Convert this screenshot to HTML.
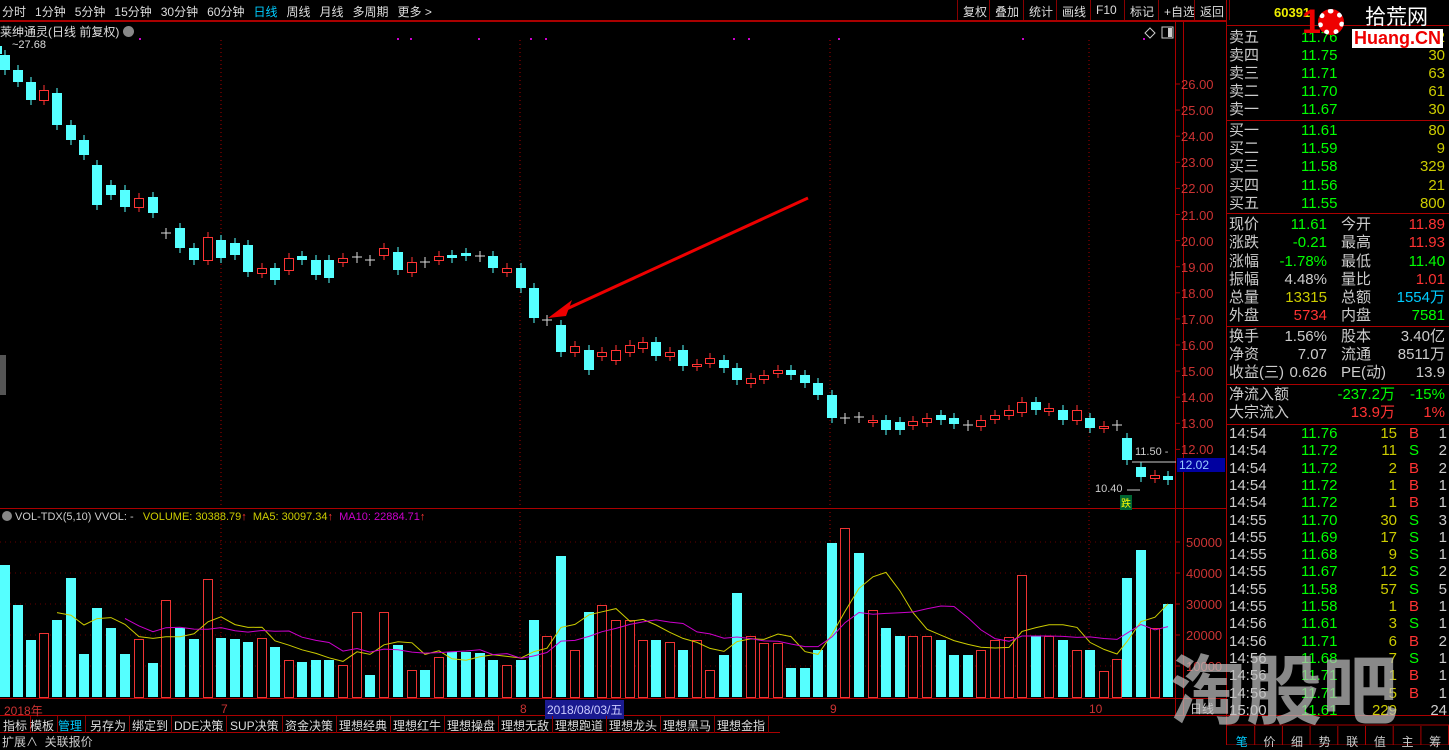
<!DOCTYPE html>
<html><head><meta charset="utf-8">
<style>
*{margin:0;padding:0;box-sizing:border-box}
body{width:1449px;height:745px;background:#000;overflow:hidden;position:relative;font-family:"Liberation Sans","Noto Sans CJK SC",sans-serif;font-size:12px;color:#c8c8c8}
.a{position:absolute;white-space:nowrap}
.tb span{margin-right:9px}
.btn{position:absolute;top:0;height:20px;border-left:1px solid #800;padding:3px 5px;font-size:12px;color:#ddd}
.rp div.r{position:absolute;left:1229px;width:218px;height:18px;font-size:15px;line-height:18px}
.r span{position:absolute}
.g{color:#0f0}.y{color:#cc0}.rd{color:#f33}.w{color:#ccc}.c{color:#0cf}
.tab{position:absolute;top:716px;height:17px;border-right:1px solid #800;padding:1px 3px;font-size:12px;color:#ddd}
</style></head><body>
<div class="a tb" style="left:2px;top:3px;font-size:12px;color:#ddd"><span>分时</span><span>1分钟</span><span>5分钟</span><span>15分钟</span><span>30分钟</span><span>60分钟</span><span style="color:#0cf">日线</span><span>周线</span><span>月线</span><span>多周期</span><span>更多 &gt;</span></div>
<div class="btn" style="left:957px">复权</div><div class="btn" style="left:989px">叠加</div><div class="btn" style="left:1023px">统计</div><div class="btn" style="left:1056px">画线</div><div class="btn" style="left:1090px">F10</div><div class="btn" style="left:1124px">标记</div><div class="btn" style="left:1158px">+自选</div><div class="btn" style="left:1194px;border-right:1px solid #800">返回</div>
<div class="a" style="left:0;top:20px;width:1226px;height:2px;background:#a00"></div>
<div class="a" style="left:0;top:23px;color:#ddd;font-size:12px">莱绅通灵(日线 前复权) <span style="display:inline-block;width:11px;height:11px;border-radius:6px;background:#888;vertical-align:-1px"></span></div>
<div class="a" style="left:12px;top:39px;color:#ddd;font-size:11px">~27.68</div>
<svg class="a" style="left:0;top:0" width="1449" height="745" id="sv"></svg>
<div id="ax"></div>
<div class="a" style="left:1177px;top:458px;width:48px;height:14px;background:#0000a0;color:#9cf;font-size:12px;padding-left:2px">12.02</div>
<div class="a" style="left:1135px;top:446px;color:#ccc;font-size:11px">11.50 -</div>
<div class="a" style="left:1095px;top:483px;color:#ccc;font-size:11px">10.40</div>
<div class="a" style="left:1120px;top:495px;background:#063;color:#ff0;font-size:10px;padding:0 1px">跌</div>
<div class="a" style="left:2px;top:511px;font-size:11px;color:#ccc"><span style="display:inline-block;width:10px;height:10px;border-radius:5px;background:#888;vertical-align:-1px"></span> VOL-TDX(5,10) VVOL: - &nbsp; <span style="color:#cc0">VOLUME: 30388.79<span style="color:#f33">↑</span> &nbsp;MA5: 30097.34<span style="color:#f33">↑</span></span> &nbsp;<span style="color:#c0c">MA10: 22884.71</span><span style="color:#f33">↑</span></div>
<div class="a" style="left:4px;top:702px;color:#c33;font-size:12px">2018年</div>
<div class="a" style="left:221px;top:702px;color:#c33">7</div>
<div class="a" style="left:520px;top:702px;color:#c33">8</div>
<div class="a" style="left:545px;top:700px;background:#1a1a90;color:#ccf;padding:1px 2px">2018/08/03/五</div>
<div class="a" style="left:830px;top:702px;color:#c33">9</div>
<div class="a" style="left:1089px;top:702px;color:#c33">10</div>
<div class="a" style="left:1190px;top:700px;color:#ccc">日线</div>
<div class="tab" style="left:0">指标</div><div class="tab" style="left:27px">模板</div><div class="tab" style="left:55px;color:#0cf">管理</div><div class="tab" style="left:87px">另存为</div><div class="tab" style="left:129px">绑定到</div><div class="tab" style="left:171px">DDE决策</div><div class="tab" style="left:227px">SUP决策</div><div class="tab" style="left:282px">资金决策</div><div class="tab" style="left:336px">理想经典</div><div class="tab" style="left:390px">理想红牛</div><div class="tab" style="left:444px">理想操盘</div><div class="tab" style="left:498px">理想无敌</div><div class="tab" style="left:552px">理想跑道</div><div class="tab" style="left:606px">理想龙头</div><div class="tab" style="left:660px">理想黑马</div><div class="tab" style="left:714px">理想金指</div>
<div class="a" style="left:2px;top:733px;color:#ccc">扩展∧ &nbsp;关联报价</div>
<div class="rp" id="rp"></div>
<div class="a" style="left:1274px;top:5px;color:#ee0;font-size:13px;font-weight:bold">60391</div>
<div class="a" style="left:1302px;top:3px;font-size:34px;font-weight:bold;color:#e00;font-family:'Liberation Sans',sans-serif;letter-spacing:-3px">1<span style="display:inline-block;width:26px;height:26px;border-radius:13px;background:#e00;border:5px dotted #fff;vertical-align:-2px"></span></div>
<div class="a" style="left:1365px;top:4px;font-size:21px;color:#fff;font-family:'Noto Sans CJK SC',sans-serif;line-height:24px">拾荒网</div>
<div class="a" style="left:1352px;top:29px;font-size:18px;color:#e00;font-weight:bold;background:#fff;padding:0 2px;line-height:19px">Huang.CN</div>
<div class="a" style="left:1170px;top:640px;font-size:76px;color:rgba(190,190,190,.72);font-family:'WenQuanYi Zen Hei','Noto Sans CJK SC',sans-serif;font-weight:bold;line-height:90px">淘股吧</div>
<div class="a" style="left:1228px;top:733px;width:221px;font-size:12px;color:#ccc;display:flex;justify-content:space-around"><span style="color:#0cf">笔</span><span>价</span><span>细</span><span>势</span><span>联</span><span>值</span><span>主</span><span>筹</span></div>
<script>
var S='';function L(x1,y1,x2,y2,c,w){S+='<line x1="'+x1+'" y1="'+y1+'" x2="'+x2+'" y2="'+y2+'" stroke="'+c+'" stroke-width="'+(w||1)+'"/>'}
function R(x,y,w,h,f,s){S+='<rect x="'+x+'" y="'+y+'" width="'+w+'" height="'+h+'" fill="'+f+'" stroke="'+(s||'none')+'"/>'}
L(1175.5,22,1175.5,715,'#a00');L(1226.5,0,1226.5,745,'#a00');L(0,508.5,1226,508.5,'#a00');L(0,698.5,1226,698.5,'#a00');L(0,715.5,1226,715.5,'#a00');L(0,732.5,780,732.5,'#a00');
L(1183.5,22,1183.5,715,'#a00');
var ax='';for(var p=26;p>=12;p--){var y=84+(26-p)*26.1;L(1176,y,1180,y,'#a00');ax+='<div class="a" style="left:1181px;top:'+(y-7)+'px;color:#c33;font-size:13px">'+p.toFixed(2)+'</div>'}
[50000,40000,30000,20000,10000].forEach(function(v){var y=697-v/10000*31;L(1176,y,1180,y,'#a00');for(var x=0;x<1175;x+=5)L(x,y,x+1,y,'#600');ax+='<div class="a" style="left:1186px;top:'+(y-7)+'px;color:#c33;font-size:13px">'+v+'</div>'});
document.getElementById('ax').innerHTML=ax;
[221,520,830,1089].forEach(function(x){for(var y=40;y<698;y+=4)L(x,y,x,y+1,'#a00')});
var K=[[5,55,70,0],[18,70,82,0],[31,82,100,0],[44,90,100,1],[57,93,125,0],[71,125,140,0],[84,140,155,0],[97,165,205,0],[111,185,195,0],[125,190,207,0],[139,198,207,1],[153,197,213,0],[166,233,234,2],[180,228,248,0],[194,248,260,0],[208,237,260,1],[221,240,258,0],[235,243,255,0],[248,245,272,0],[262,268,273,1],[275,268,280,0],[289,258,270,1],[302,256,260,0],[316,260,275,0],[329,260,278,0],[343,258,262,1],[357,257,258,2],[370,260,261,2],[384,248,255,1],[398,252,270,0],[412,262,272,1],[425,262,263,2],[439,256,260,1],[452,255,258,0],[466,253,256,0],[480,256,257,2],[493,256,268,0],[507,268,272,1],[521,268,288,0],[534,288,318,0],[547,320,321,2],[561,325,352,0],[575,346,352,1],[589,350,370,0],[602,352,356,1],[616,350,360,1],[630,345,352,1],[643,342,348,1],[656,342,356,0],[670,352,356,1],[683,350,366,0],[697,364,366,1],[710,358,363,1],[724,360,368,0],[737,368,380,0],[751,378,383,1],[764,375,379,1],[778,370,373,1],[791,370,375,0],[805,375,383,0],[818,383,395,0],[832,395,418,0],[845,418,419,2],[859,417,418,2],[873,420,422,1],[886,420,430,0],[900,422,430,0],[913,421,425,1],[927,418,422,1],[941,415,420,0],[954,418,424,0],[968,425,426,2],[981,420,426,1],[995,415,419,1],[1009,410,415,1],[1022,402,412,1],[1036,402,410,0],[1049,408,411,1],[1063,410,420,0],[1077,410,420,1],[1090,418,428,0],[1104,426,428,1],[1117,425,426,2],[1127,438,460,0],[1141,467,477,0],[1155,475,478,1],[1168,476,480,0]];
var V=[565,605,640,633,620,578,654,608,628,654,639,663,600,628,639,579,638,639,642,638,647,660,662,660,660,665,612,675,612,645,670,670,657,652,652,653,660,665,660,620,636,556,650,612,605,620,620,640,640,642,650,640,670,655,593,636,643,643,668,668,650,543,528,553,610,628,636,636,636,640,655,655,650,640,637,575,636,636,640,650,650,671,659,578,550,628,604];
K.forEach(function(k,i){var x=k[0],c=k[3]==0?'#5ff':'#f33';var col=k[3]==2?'#ddd':c;L(x,k[1]-5,x,k[2]+5,col);
 if(k[3]==0)R(x-5,k[1],10,Math.max(1,k[2]-k[1]),'#5ff');else if(k[3]==1)R(x-4.5,k[1]+.5,9,Math.max(1,k[2]-k[1]),'#000','#f33');else L(x-5,k[1],x+5,k[1],'#ddd');
 var v=V[i];if(k[3]==0||k[3]==2&&i%2)R(x-5,v,10,697-v,'#5ff');else R(x-4.5,v+.5,9,697-v,'#000','#e33');});
function ma(n,col){var pts=[];for(var i=n-1;i<V.length;i++){var s=0;for(var j=0;j<n;j++)s+=V[i-j];pts.push(K[i][0]+','+(s/n).toFixed(1))}S+='<polyline fill="none" stroke="'+col+'" points="'+pts.join(' ')+'"/>'}
ma(5,'#cc0');ma(10,'#c0c');
S+='<line x1="808" y1="198" x2="560" y2="312" stroke="#e00" stroke-width="3"/><polygon points="548,318 572,300 566,316" fill="#e00"/>';
L(1132,462,1176,462,'#ccc');L(1127,490,1140,490,'#ccc');
[25,120,213,326,384,424,715].forEach(function(y){L(1227,y+.5,1449,y+.5,'#a00')});
S+='<rect x="1226.5" y="725" width="222" height="20" fill="none" stroke="#a00"/>';
for(var i=1;i<8;i++)L(1227+i*27.7,726,1227+i*27.7,745,'#a00');
[139,397,410,478,530,545,733,748,838,1022,1143].forEach(function(x){R(x,38,2,2,'#c0c')});
S+='<polygon points="1150,28 1155,33 1150,38 1145,33" fill="none" stroke="#ccc"/><rect x="1162" y="27" width="11" height="11" fill="none" stroke="#ccc"/><rect x="1168" y="28" width="4" height="9" fill="#ccc"/>';
R(0,46,2,8,'#5ff');
S+='<rect x="0" y="355" width="6" height="40" fill="#555"/>';
document.getElementById('sv').innerHTML=S;
var rows=[['卖五','11.76','2',38],['卖四','11.75','30',56],['卖三','11.71','63',74],['卖二','11.70','61',92],['卖一','11.67','30',110],['买一','11.61','80',131],['买二','11.59','9',149],['买三','11.58','329',167],['买四','11.56','21',186],['买五','11.55','800',204]];
var h='';rows.forEach(function(r){h+='<div class="r" style="top:'+(r[3]-9)+'px"><span class="w" style="left:0">'+r[0]+'</span><span class="g" style="left:72px">'+r[1]+'</span><span class="y" style="right:2px">'+r[2]+'</span></div>'});
var q=[['现价','11.61','g','今开','11.89','rd',225],['涨跌','-0.21','g','最高','11.93','rd',243],['涨幅','-1.78%','g','最低','11.40','g',262],['振幅','4.48%','w','量比','1.01','rd',280],['总量','13315','y','总额','1554万','c',298],['外盘','5734','rd','内盘','7581','g',316],['换手','1.56%','w','股本','3.40亿','w',337],['净资','7.07','w','流通','8511万','w',355],['收益(三)','0.626','w','PE(动)','13.9','w',373]];
q.forEach(function(r){h+='<div class="r" style="top:'+(r[6]-9)+'px"><span class="w" style="left:0">'+r[0]+'</span><span class="'+r[2]+'" style="right:120px">'+r[1]+'</span><span class="w" style="left:112px">'+r[3]+'</span><span class="'+r[5]+'" style="right:2px">'+r[4]+'</span></div>'});
h+='<div class="r" style="top:386px"><span class="w" style="left:0">净流入额</span><span class="g" style="right:52px">-237.2万</span><span class="g" style="right:2px">-15%</span></div>';
h+='<div class="r" style="top:404px"><span class="w" style="left:0">大宗流入</span><span class="rd" style="right:52px">13.9万</span><span class="rd" style="right:2px">1%</span></div>';
var t=[['14:54','11.76','15','B','1'],['14:54','11.72','11','S','2'],['14:54','11.72','2','B','2'],['14:54','11.72','1','B','1'],['14:54','11.72','1','B','1'],['14:55','11.70','30','S','3'],['14:55','11.69','17','S','1'],['14:55','11.68','9','S','1'],['14:55','11.67','12','S','2'],['14:55','11.58','57','S','5'],['14:55','11.58','1','B','1'],['14:56','11.61','3','S','1'],['14:56','11.71','6','B','2'],['14:56','11.68','7','S','1'],['14:56','11.71','1','B','1'],['14:56','11.71','5','B','1'],['15:00','11.61','229','','24']];
t.forEach(function(r,i){var y=425+i*17.3;h+='<div class="r" style="top:'+y+'px"><span class="w" style="left:0">'+r[0]+'</span><span class="g" style="left:72px">'+r[1]+'</span><span class="y" style="right:50px">'+r[2]+'</span><span class="'+(r[3]=='B'?'rd':'g')+'" style="left:180px">'+r[3]+'</span><span class="w" style="right:0">'+r[4]+'</span></div>'});
document.getElementById('rp').innerHTML=h;
</script>
</body></html>
